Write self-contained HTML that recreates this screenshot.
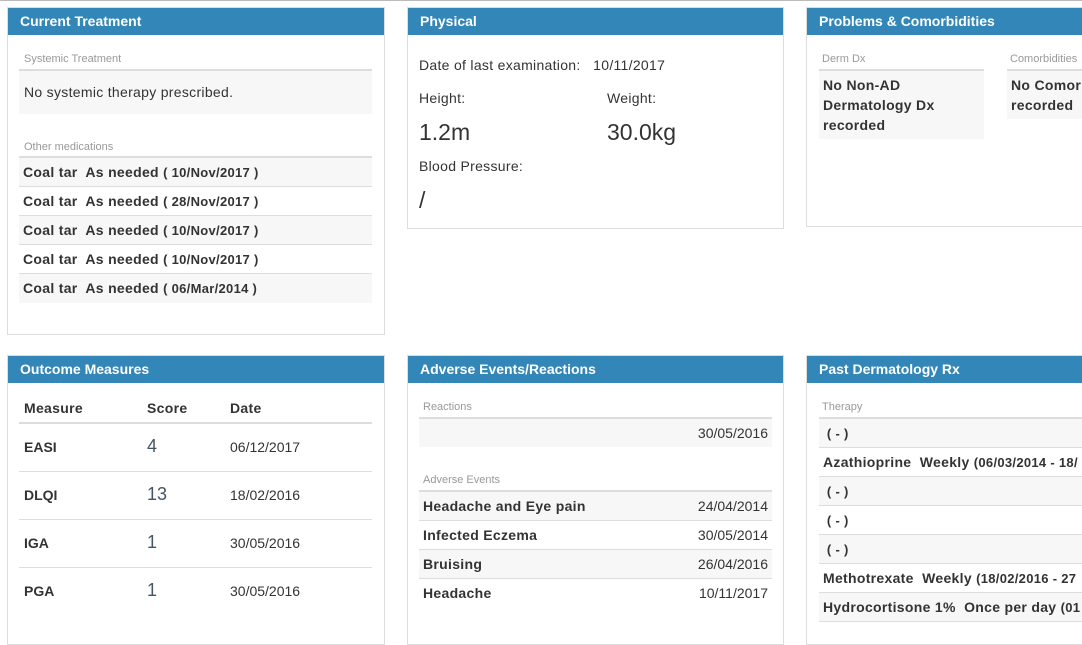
<!DOCTYPE html>
<html><head><style>
*{margin:0;padding:0;box-sizing:border-box}
body{width:1082px;height:625px;overflow:hidden;background:#fff;font-family:"Liberation Sans",sans-serif;color:#333;position:relative}
.p{position:absolute;border:1px solid #ddd;background:#fff}
.h{position:absolute;left:0;right:0;top:0;height:27px;background:#3286b8;color:#fff;font-weight:bold;font-size:14px;line-height:27px;padding-left:12px}
.a{position:absolute;white-space:nowrap}
.lb{font-size:11px;color:#999}
.ln{position:absolute;height:2px;background:#ddd}
.r{position:absolute;height:29px;border-bottom:1px solid #ddd;font-size:14px;line-height:29px;padding-left:4px;white-space:nowrap;overflow:hidden}
.g{background:#f7f7f7}
b{font-weight:bold;letter-spacing:0.3px}
.sm{font-size:13px}
</style></head><body>
<div class="a" style="left:0;top:0;width:1082px;height:1px;background:#bbb"></div>

<!-- Current Treatment -->
<div class="p" style="left:7px;top:7px;width:378px;height:328px">
<div class="h">Current Treatment</div>
</div>
<div class="a lb" style="left:24px;top:53px">Systemic Treatment</div>
<div class="ln" style="left:19px;top:69px;width:353px"></div>
<div class="a g" style="left:19px;top:71px;width:353px;height:43px;font-size:14px;line-height:43px;padding-left:5px;letter-spacing:0.3px">No systemic therapy prescribed.</div>
<div class="a lb" style="left:24px;top:141px">Other medications</div>
<div class="ln" style="left:19px;top:156px;width:353px"></div>
<div class="r g" style="left:19px;top:158px;width:353px"><b>Coal tar&nbsp; As needed <span class="sm">( 10/Nov/2017 )</span></b></div>
<div class="r" style="left:19px;top:187px;width:353px"><b>Coal tar&nbsp; As needed <span class="sm">( 28/Nov/2017 )</span></b></div>
<div class="r g" style="left:19px;top:216px;width:353px"><b>Coal tar&nbsp; As needed <span class="sm">( 10/Nov/2017 )</span></b></div>
<div class="r" style="left:19px;top:245px;width:353px"><b>Coal tar&nbsp; As needed <span class="sm">( 10/Nov/2017 )</span></b></div>
<div class="r g" style="left:19px;top:274px;width:353px;border-bottom:none"><b>Coal tar&nbsp; As needed <span class="sm">( 06/Mar/2014 )</span></b></div>

<!-- Physical -->
<div class="p" style="left:407px;top:7px;width:377px;height:222px">
<div class="h">Physical</div>
</div>
<div class="a" style="left:419px;top:57px;font-size:14px;letter-spacing:0.3px">Date of last examination:&nbsp;&nbsp; 10/11/2017</div>
<div class="a" style="left:419px;top:90px;font-size:14px;letter-spacing:0.3px">Height:</div>
<div class="a" style="left:607px;top:90px;font-size:14px;letter-spacing:0.3px">Weight:</div>
<div class="a" style="left:419px;top:119px;font-size:23px">1.2m</div>
<div class="a" style="left:607px;top:119px;font-size:23px">30.0kg</div>
<div class="a" style="left:419px;top:158px;font-size:14px;letter-spacing:0.3px">Blood Pressure:</div>
<div class="a" style="left:419px;top:187px;font-size:23px">/</div>

<!-- Problems -->
<div class="p" style="left:806px;top:7px;width:290px;height:220px">
<div class="h">Problems &amp; Comorbidities</div>
</div>
<div class="a lb" style="left:822px;top:53px">Derm Dx</div>
<div class="ln" style="left:819px;top:69px;width:165px"></div>
<div class="a g" style="left:819px;top:71px;width:165px;height:68px;font-size:14px;font-weight:bold;line-height:20px;padding:4px 4px;white-space:normal;letter-spacing:0.3px">No Non-AD Dermatology Dx recorded</div>
<div class="a lb" style="left:1010px;top:53px">Comorbidities</div>
<div class="ln" style="left:1007px;top:69px;width:80px"></div>
<div class="a g" style="left:1007px;top:71px;width:80px;height:48px;font-size:14px;font-weight:bold;line-height:20px;padding:4px 4px;overflow:hidden;letter-spacing:0.3px">No Comor<br>recorded</div>

<!-- Outcome -->
<div class="p" style="left:7px;top:355px;width:378px;height:290px">
<div class="h">Outcome Measures</div>
</div>
<div class="a" style="left:24px;top:400px;font-size:14px;font-weight:bold;letter-spacing:0.3px">Measure</div>
<div class="a" style="left:147px;top:400px;font-size:14px;font-weight:bold;letter-spacing:0.3px">Score</div>
<div class="a" style="left:230px;top:400px;font-size:14px;font-weight:bold;letter-spacing:0.3px">Date</div>
<div class="ln" style="left:19px;top:422px;width:353px"></div>
<div class="a" style="left:19px;top:424px;width:353px;height:48px;border-bottom:1px solid #ddd"></div>
<div class="a" style="left:19px;top:472px;width:353px;height:48px;border-bottom:1px solid #ddd"></div>
<div class="a" style="left:19px;top:520px;width:353px;height:48px;border-bottom:1px solid #ddd"></div>
<div class="a" style="left:24px;top:439px;font-size:14px;font-weight:bold">EASI</div>
<div class="a" style="left:147px;top:436px;font-size:18px;color:#456">4</div>
<div class="a" style="left:230px;top:439px;font-size:14px">06/12/2017</div>
<div class="a" style="left:24px;top:487px;font-size:14px;font-weight:bold">DLQI</div>
<div class="a" style="left:147px;top:484px;font-size:18px;color:#456">13</div>
<div class="a" style="left:230px;top:487px;font-size:14px">18/02/2016</div>
<div class="a" style="left:24px;top:535px;font-size:14px;font-weight:bold">IGA</div>
<div class="a" style="left:147px;top:532px;font-size:18px;color:#456">1</div>
<div class="a" style="left:230px;top:535px;font-size:14px">30/05/2016</div>
<div class="a" style="left:24px;top:583px;font-size:14px;font-weight:bold">PGA</div>
<div class="a" style="left:147px;top:580px;font-size:18px;color:#456">1</div>
<div class="a" style="left:230px;top:583px;font-size:14px">30/05/2016</div>

<!-- Adverse -->
<div class="p" style="left:407px;top:355px;width:377px;height:290px">
<div class="h">Adverse Events/Reactions</div>
</div>
<div class="a lb" style="left:423px;top:401px">Reactions</div>
<div class="ln" style="left:419px;top:417px;width:353px"></div>
<div class="a g" style="left:419px;top:419px;width:353px;height:28px;font-size:14px;line-height:28px;text-align:right;padding-right:4px">30/05/2016</div>
<div class="a lb" style="left:423px;top:474px">Adverse Events</div>
<div class="ln" style="left:419px;top:490px;width:353px"></div>
<div class="r g" style="left:419px;top:492px;width:353px"><b>Headache and Eye pain</b><span style="position:absolute;right:4px">24/04/2014</span></div>
<div class="r" style="left:419px;top:521px;width:353px"><b>Infected Eczema</b><span style="position:absolute;right:4px">30/05/2014</span></div>
<div class="r g" style="left:419px;top:550px;width:353px"><b>Bruising</b><span style="position:absolute;right:4px">26/04/2016</span></div>
<div class="r" style="left:419px;top:579px;width:353px;border-bottom:none"><b>Headache</b><span style="position:absolute;right:4px">10/11/2017</span></div>

<!-- Past Derm -->
<div class="p" style="left:806px;top:355px;width:290px;height:290px">
<div class="h">Past Dermatology Rx</div>
</div>
<div class="a lb" style="left:822px;top:401px">Therapy</div>
<div class="ln" style="left:819px;top:417px;width:270px"></div>
<div class="r g" style="left:819px;top:419px;width:270px"><b class="sm">&nbsp;( - )</b></div>
<div class="r" style="left:819px;top:448px;width:270px"><b>Azathioprine&nbsp; Weekly <span class="sm">(06/03/2014 - 18/</span></b></div>
<div class="r g" style="left:819px;top:477px;width:270px"><b class="sm">&nbsp;( - )</b></div>
<div class="r" style="left:819px;top:506px;width:270px"><b class="sm">&nbsp;( - )</b></div>
<div class="r g" style="left:819px;top:535px;width:270px"><b class="sm">&nbsp;( - )</b></div>
<div class="r" style="left:819px;top:564px;width:270px"><b>Methotrexate&nbsp; Weekly <span class="sm">(18/02/2016 - 27</span></b></div>
<div class="r g" style="left:819px;top:593px;width:270px"><b>Hydrocortisone 1%&nbsp; Once per day <span class="sm">(01</span></b></div>
</body></html>
